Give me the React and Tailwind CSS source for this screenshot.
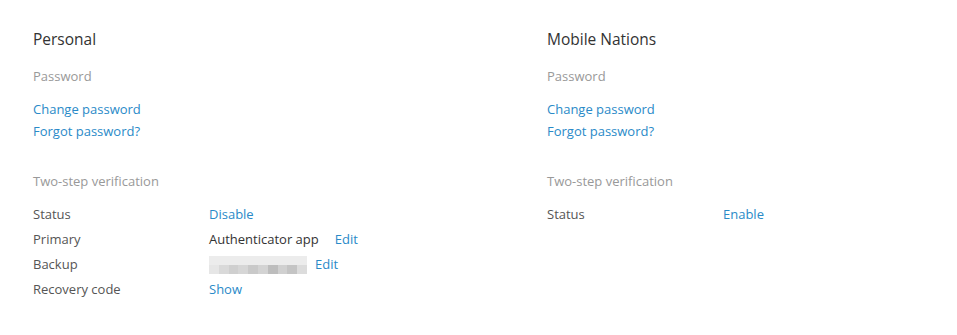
const font = { fontFamily: "'Open Sans', 'Liberation Sans', sans-serif" };

function Blurred() {
  const shades = ["#e6e6e6", "#d9d9d9", "#cfcfcf", "#d6d6d6", "#c9c9c9", "#d3d3d3", "#bdbdbd", "#d0d0d0", "#c4c4c4", "#dcdcdc"];
  return (
    <div className="flex h-[18px] w-[98px] overflow-hidden">
      {shades.map((c, i) => (
        <div key={i} className="flex-1 flex flex-col">
          <div className="h-1/2 bg-[#ececec]" />
          <div className="h-1/2" style={{ background: c }} />
        </div>
      ))}
    </div>
  );
}

function Row({ label, children }) {
  return (
    <div className="flex items-center h-[25px]">
      <div className="w-[176px] text-[#555]">{label}</div>
      <div className="flex items-center gap-[8px]">{children}</div>
    </div>
  );
}

function Section({ title, twoStep }) {
  return (
    <div className="w-[514px] shrink-0 text-[13px]">
      <h2 className="text-[15.5px] text-[#333] h-[22px] leading-[22px]">{title}</h2>
      <div className="mt-[15px] text-[#999] leading-[22px]">Password</div>
      <div className="mt-[11px] flex flex-col text-[#2a8ac8] leading-[22px]">
        <a>Change password</a>
        <a>Forgot password?</a>
      </div>
      <div className="mt-[28px] text-[#999] leading-[22px]">Two-step verification</div>
      <div className="mt-[10px]">{twoStep}</div>
    </div>
  );
}

export default function App() {
  return (
    <div className="bg-white w-[957px] h-[335px] px-[33px] pt-[28px] flex overflow-hidden" style={font}>
      <Section
        title="Personal"
        twoStep={
          <>
            <Row label="Status"><a className="text-[#2a8ac8]">Disable</a></Row>
            <Row label="Primary">
              <span className="text-[#333]">Authenticator app</span>
              <a className="text-[#2a8ac8] ml-[8px]">Edit</a>
            </Row>
            <Row label="Backup">
              <Blurred />
              <a className="text-[#2a8ac8]">Edit</a>
            </Row>
            <Row label="Recovery code"><a className="text-[#2a8ac8]">Show</a></Row>
          </>
        }
      />
      <Section
        title="Mobile Nations"
        twoStep={<Row label="Status"><a className="text-[#2a8ac8]">Enable</a></Row>}
      />
    </div>
  );
}
